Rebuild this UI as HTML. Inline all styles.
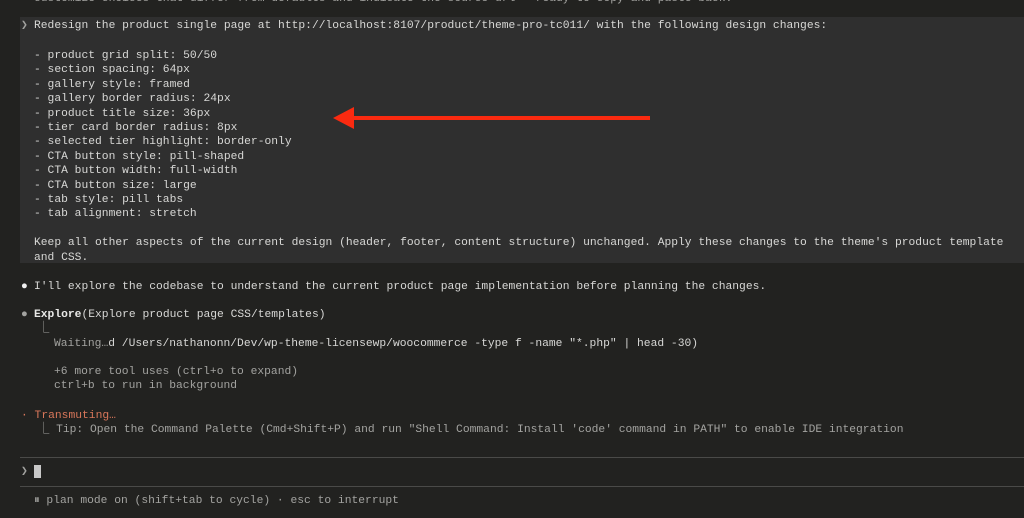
<!DOCTYPE html>
<html><head><meta charset="utf-8"><style>
html,body{margin:0;padding:0;width:1024px;height:518px;overflow:hidden;background:#222220;}
body{position:relative;font-family:"Liberation Mono",monospace;font-size:11.3px;color:#d8d8d6;}
.l{position:absolute;white-space:pre;line-height:14.4px;height:14.4px;}
.blk{position:absolute;left:20px;top:17px;width:1004px;height:246px;background:#2f2f2f;}
.dim{color:#a3a3a0;}
.sep{position:absolute;left:20px;width:1004px;height:1px;background:#4a4a48;}
b{font-weight:bold;color:#e8e8e6;}
</style></head><body>
<div class="l dim" style="left:34px;top:-8px;">customize choices that differ from defaults and indicate the source url — ready to copy and paste back.</div>
<div class="blk"></div>
<div class="l dim" style="left:21px;top:19px;">❯</div>
<div class="l" style="left:34px;top:19px;">Redesign the product single page at http://localhost:8107/product/theme-pro-tc011/ with the following design changes:</div>
<div class="l" style="left:34px;top:49px;">- product grid split: 50/50
- section spacing: 64px
- gallery style: framed
- gallery border radius: 24px
- product title size: 36px
- tier card border radius: 8px
- selected tier highlight: border-only
- CTA button style: pill-shaped
- CTA button width: full-width
- CTA button size: large
- tab style: pill tabs
- tab alignment: stretch

Keep all other aspects of the current design (header, footer, content structure) unchanged. Apply these changes to the theme's product template
and CSS.</div>
<svg style="position:absolute;left:0;top:0" width="1024" height="518"><line x1="350" y1="118" x2="650" y2="118" stroke="#fa2a10" stroke-width="4"/><polygon points="333,118 354,107 354,129" fill="#fa2a10"/></svg>
<div class="l" style="left:21px;top:280px;color:#f0f0f0;">●</div>
<div class="l" style="left:34px;top:280px;">I'll explore the codebase to understand the current product page implementation before planning the changes.</div>
<div class="l dim" style="left:21px;top:308px;">●</div>
<div class="l" style="left:34px;top:308px;"><b>Explore</b>(Explore product page CSS/templates)</div>
<div class="l dim" style="left:38px;top:322px;">⎿</div>
<div class="l dim" style="left:54px;top:337px;">Waiting…<span style="color:#d8d8d6">d /Users/nathanonn/Dev/wp-theme-licensewp/woocommerce -type f -name "*.php" | head -30)</span></div>
<div class="l dim" style="left:54px;top:365px;">+6 more tool uses (ctrl+o to expand)
ctrl+b to run in background</div>
<div class="l" style="left:21px;top:409px;color:#d9775a;">· Transmuting…</div>
<div class="l dim" style="left:38px;top:423px;">⎿ Tip: Open the Command Palette (Cmd+Shift+P) and run "Shell Command: Install 'code' command in PATH" to enable IDE integration</div>
<div class="sep" style="top:457px;"></div>
<div class="l dim" style="left:21px;top:465px;">❯</div>
<div style="position:absolute;left:34px;top:465px;width:7px;height:13px;background:#c8c8c8;"></div>
<div class="sep" style="top:486px;"></div>
<div class="l dim" style="left:34px;top:494px;">⏸ plan mode on (shift+tab to cycle) · esc to interrupt</div>
</body></html>
